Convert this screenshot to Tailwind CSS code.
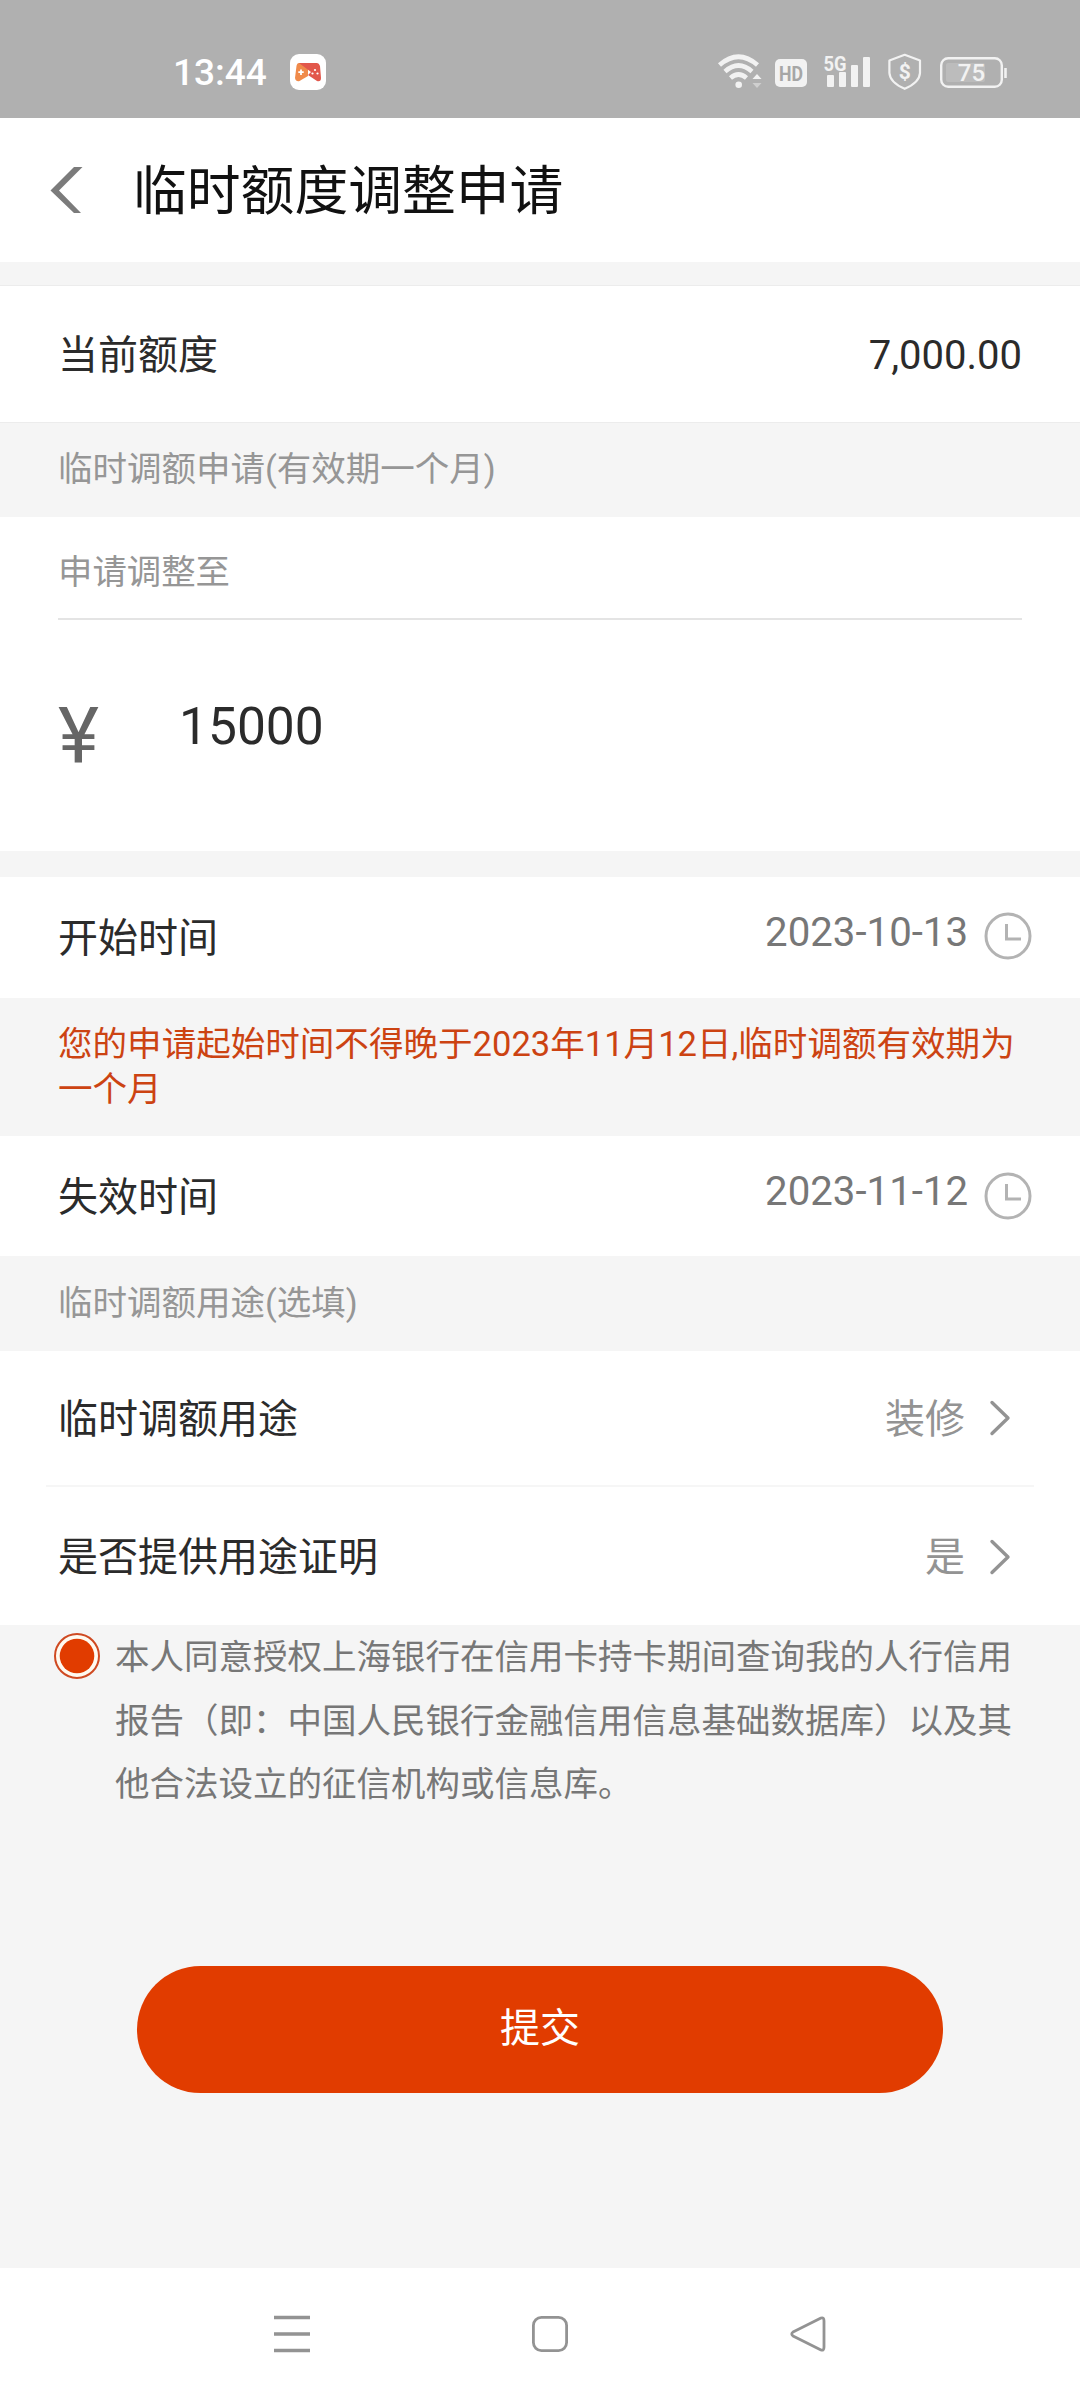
<!DOCTYPE html>
<html lang="zh-CN">
<head>
<meta charset="utf-8">
<title>临时额度调整申请</title>
<script src="https://cdn.jsdelivr.net/npm/@tailwindcss/browser@4"></script>
</head>
<body class="bg-[#f5f5f5]">
<div class="flex h-[2400px] w-[1080px] flex-col overflow-hidden bg-[#f5f5f5] font-['Roboto','Noto_Sans_CJK_SC',sans-serif] text-[40px] whitespace-nowrap text-[#2b2b2b]">

  <!-- status bar -->
  <div class="flex h-[118px] shrink-0 items-start justify-between bg-[#b0b0b0] text-white">
    <div class="flex items-start pt-[54px] pl-[173px]">
      <span class="w-[117px] pt-px text-[37px] leading-9 font-medium">13:44</span>
      <svg class="h-9 w-9" viewBox="0 0 36 36">
        <rect width="36" height="36" rx="9" fill="#fff"/>
        <path d="M9 9H18V22L9.500 27Q6 28 5 24L6.500 12Q7 9 9 9Z" fill="#f08a4a"/>
        <path d="M9 9H27Q29 9 30 12L31 24Q31 28 27 27L18 21L21 18Z" fill="#e2574b"/>
        <path d="M11 15.500V21M8.300 18.200H13.700" stroke="#fff" stroke-width="1.800"/>
        <g fill="#fff"><circle cx="25" cy="16" r="1.100"/><circle cx="22.500" cy="19.500" r="1.100"/><circle cx="27.500" cy="19.500" r="1.100"/></g>
      </svg>
    </div>
    <svg class="mt-[50px] h-11 w-[365px]" viewBox="715 50 365 44">
      <g fill="none" stroke="#f2f2f2" stroke-width="4.600">
        <path d="M719.500 65Q738.500 48.500 757.500 65"/>
        <path d="M725 71.500Q738.500 59.500 752 71.500"/>
        <path d="M730.500 78Q738.500 71 746.500 78"/>
      </g>
      <circle cx="738.700" cy="84.700" r="3.300" fill="#f2f2f2"/>
      <path d="M752.500 79L757 74L761.500 79Z" fill="#f2f2f2"/>
      <path d="M752.500 83L757 88L761.500 83Z" fill="#cfcfcf"/>
      <rect x="775" y="59" width="32" height="28" rx="5" fill="#f2f2f2"/>
      <text x="791" y="80.500" text-anchor="middle" font-size="21" font-weight="700" textLength="24" lengthAdjust="spacingAndGlyphs" fill="#a6a6a6">HD</text>
      <text x="823.500" y="70.500" font-size="20" font-weight="700" textLength="23" lengthAdjust="spacingAndGlyphs" fill="#f2f2f2">5G</text>
      <g fill="#f2f2f2">
        <rect x="827" y="75" width="7" height="12" rx="1"/>
        <rect x="839" y="72" width="7" height="15" rx="1"/>
        <rect x="851" y="65" width="7" height="22" rx="1"/>
        <rect x="863" y="57" width="7" height="30" rx="1"/>
      </g>
      <path d="M904.700 54.800L920 60.500V73Q919.500 82.500 904.700 88.800Q890 82.500 889.400 73V60.500Z" fill="none" stroke="#f2f2f2" stroke-width="2.200" stroke-linejoin="round"/>
      <text x="904.700" y="79" text-anchor="middle" font-size="21" font-weight="700" fill="#f2f2f2">$</text>
      <rect x="941.200" y="58.200" width="60.600" height="28.600" rx="7" fill="none" stroke="#f2f2f2" stroke-width="2.400"/>
      <rect x="946" y="63" width="39" height="19" rx="2" fill="#bcbcbc"/>
      <path d="M1005.500 68V78" stroke="#f2f2f2" stroke-width="2.600"/>
      <text x="971.500" y="81" text-anchor="middle" font-size="24" font-weight="500" fill="#f2f2f2">75</text>
    </svg>
  </div>

  <!-- title bar -->
  <header class="flex h-[144px] shrink-0 items-center bg-white pl-[48px]">
    <svg class="h-12 w-[36px]" viewBox="48 166 36 48"><path d="M78 167H82.500L59 190.500L81 213H74L50.500 190.500L74 167Z" fill="#7b7b7b"/></svg>
    <h1 class="ml-[49px] pt-[3px] text-[53.800px] leading-[140px] text-[#111]">临时额度调整申请</h1>
  </header>

  <div class="mt-[23px] flex h-[138px] shrink-0 items-center justify-between border-y border-[#ececec] bg-white px-[58px] pt-[3px]">
    <span>当前额度</span>
    <span>7,000.00</span>
  </div>

  <div class="h-[94px] shrink-0 px-[58px] text-[34.500px] leading-[92px] text-[#969696]">临时调额申请(有效期一个月)</div>

  <section class="flex h-[334px] shrink-0 flex-col bg-white px-[58px]">
    <div class="h-[103px] border-b-2 border-[#e4e4e4] text-[34.400px] leading-[110px] text-[#969696]">申请调整至</div>
    <div class="flex items-start pt-[77px]">
      <span class="w-[121px] text-[78px] leading-[77px] text-[#666]">¥</span>
      <span class="text-[51.500px] leading-[60px]">15000</span>
    </div>
  </section>

  <div class="mt-[26px] flex h-[121px] shrink-0 items-center bg-white pr-[48px] pl-[58px]">
    <span class="flex-1 pt-[3px] leading-[118px]">开始时间</span>
    <span class="mr-[16px] pb-2 text-[40.200px] text-[#777]">2023-10-13</span>
    <svg class="mb-1 h-12 w-12" viewBox="0 0 48 48" fill="none" stroke="#b3b3b3" stroke-width="3"><circle cx="24" cy="24" r="22"/><path d="M22.500 12V27H37"/></svg>
  </div>

  <div class="h-[138px] shrink-0 px-[58px] pt-[24px] text-[34.550px] leading-[45px] text-[#cc4312]">您的申请起始时间不得晚于2023年11月12日,临时调额有效期为<br>一个月</div>

  <div class="flex h-[120px] shrink-0 items-center bg-white pr-[48px] pl-[58px]">
    <span class="flex-1 pt-[4px] leading-[116px]">失效时间</span>
    <span class="mr-[16px] pb-[7px] text-[40.200px] text-[#777]">2023-11-12</span>
    <svg class="h-12 w-12" viewBox="0 0 48 48" fill="none" stroke="#b3b3b3" stroke-width="3"><circle cx="24" cy="24" r="22"/><path d="M22.500 12V27H37"/></svg>
  </div>

  <div class="h-[95px] shrink-0 px-[58px] text-[34.500px] leading-[95px] text-[#969696]">临时调额用途(选填)</div>

  <section class="flex h-[274px] shrink-0 flex-col bg-white px-[46px]">
    <div class="flex h-[136px] items-center border-b-2 border-[#f6f6f6] pr-[21px] pl-3">
      <span class="flex-1 pt-[3px]">临时调额用途</span>
      <span class="mr-[24px] pt-[3px] text-[#939393]">装修</span>
      <svg class="h-10 w-6" viewBox="0 0 24 40" fill="none" stroke="#939393" stroke-width="3.400" stroke-linecap="round" stroke-linejoin="round"><path d="M3 4.500L19 20L3 35.500"/></svg>
    </div>
    <div class="flex h-[138px] items-center pr-[21px] pl-3">
      <span class="flex-1 pt-[4px]">是否提供用途证明</span>
      <span class="mr-[24px] pt-[4px] text-[#939393]">是</span>
      <svg class="mt-0.5 h-10 w-6" viewBox="0 0 24 40" fill="none" stroke="#939393" stroke-width="3.400" stroke-linecap="round" stroke-linejoin="round"><path d="M3 4.500L19 20L3 35.500"/></svg>
    </div>
  </section>

  <!-- consent -->
  <div class="flex h-[341px] shrink-0 items-start pl-[53px]">
    <svg class="mt-[7px] h-12 w-12" viewBox="0 0 48 48"><circle cx="24" cy="24" r="22" fill="#fffaf0" stroke="#cf4a22" stroke-width="2"/><circle cx="24" cy="24" r="17.300" fill="#e13c00"/></svg>
    <p class="ml-[14px] pt-px text-[34.500px] leading-[63.500px] text-[#777]">本人同意授权上海银行在信用卡持卡期间查询我的人行信用<br>报告（即：中国人民银行金融信用信息基础数据库）以及其<br>他合法设立的征信机构或信息库。</p>
  </div>

  <button class="mx-[137px] h-[127px] shrink-0 rounded-full bg-[#e13c00] pb-px text-[40px] text-white">提交</button>

  <!-- navigation bar -->
  <nav class="mt-[175px] flex h-[132px] shrink-0 items-center justify-between bg-white pr-[253px] pl-[273px]">
    <svg class="h-[38px] w-[38px]" viewBox="0 0 38 38" stroke="#939393" stroke-width="3.600"><path d="M1 2.500H37M1 19H37M1 35.500H37"/></svg>
    <svg class="h-[38px] w-[38px]" viewBox="0 0 38 38" fill="none" stroke="#939393" stroke-width="2.800"><rect x="2.400" y="2.400" width="33.200" height="33.200" rx="8"/></svg>
    <svg class="h-[38px] w-[38px]" viewBox="0 0 38 38" fill="none" stroke="#939393" stroke-width="2.800" stroke-linejoin="round"><path d="M32 3L4 17Q1.500 19 4 21L32 35Q35 36 35 32V6Q35 2 32 3Z"/></svg>
  </nav>
</div>
</body>
</html>
